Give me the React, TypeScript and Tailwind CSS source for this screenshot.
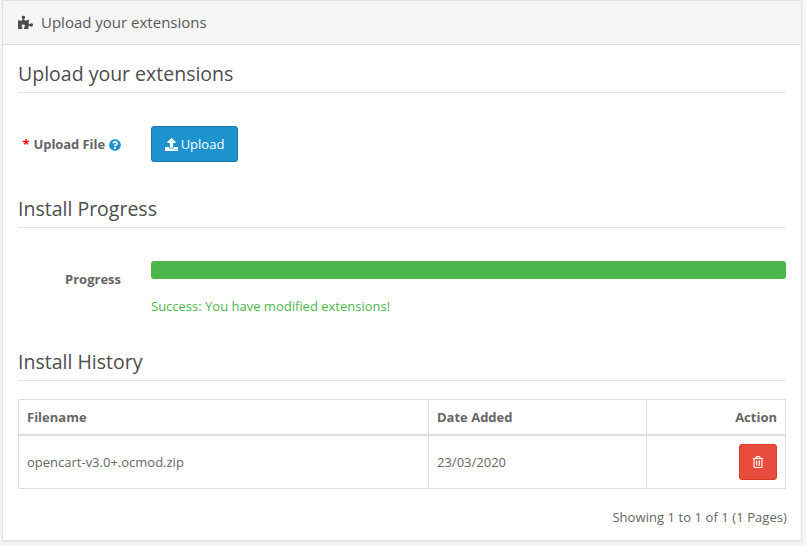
import React from 'react';
import { FaPuzzlePiece, FaUpload, FaQuestionCircle, FaRegTrashAlt } from 'react-icons/fa';

const SectionTitle: React.FC<{ children: React.ReactNode }> = ({ children }) => (
  <div className="h-[30px] border-b border-[#e5e5e5] text-[19.5px] leading-[22px] text-[#4d4d4d]">{children}</div>
);

const App: React.FC = () => {
  return (
    <div className="h-[546px] overflow-hidden bg-[#f5f5f5] pr-[4px] pl-[2px] font-['Open_Sans',sans-serif] text-[13px] text-[#666666]">
      <div className="h-[541px] border border-[#e0e0e0] bg-white shadow-[0_1px_1px_rgba(0,0,0,0.05)]">
        <div className="flex h-[44px] items-center border-b border-[#dddddd] bg-[#f5f5f5] pl-[15px] text-[15px] text-[#595959]">
          <FaPuzzlePiece className="mr-[8px] h-[15px] w-[15px] text-[#4d4d4d]" />
          Upload your extensions
        </div>
        <div className="px-[15px] pt-[18px]">
          <SectionTitle>Upload your extensions</SectionTitle>
          <div className="mt-[33px] flex h-[36px] items-center">
            <div className="flex w-[133px] items-center justify-end pt-[2px] pr-[30px] font-bold">
              <span className="mr-[4px] text-[#ff0000]">*</span>
              <span className="tracking-[-0.08px]">Upload File</span>
              <FaQuestionCircle className="ml-[4px] h-[12px] w-[12px] text-[#1e91cf]" />
            </div>
            <button className="flex h-[36px] w-[87px] items-center justify-center rounded-[3px] border border-[#1978ab] bg-[#1e91cf] pt-[1px] text-white">
              <FaUpload className="mr-[3px] h-[13px] w-[13px]" />
              Upload
            </button>
          </div>
          <div className="mt-[36px]">
            <SectionTitle>Install Progress</SectionTitle>
          </div>
          <div className="mt-[33px] flex">
            <div className="w-[133px] pr-[30px] pt-[9px] text-right font-bold">Progress</div>
            <div className="flex-1">
              <div className="h-[18px] rounded-[3px] bg-[#4cb64c]" />
              <div className="mt-[18px] leading-[18px] text-[#4cb64c]">Success: You have modified extensions!</div>
            </div>
          </div>
          <div className="mt-[36px]">
            <SectionTitle>Install History</SectionTitle>
          </div>
          <table className="mt-[18px] w-full table-fixed border-collapse border border-[#dddddd]">
            <colgroup>
              <col className="w-[410px]" />
              <col className="w-[218px]" />
              <col />
            </colgroup>
            <thead>
              <tr className="h-[35px]">
                <th className="border border-b-2 border-[#dddddd] px-[8px] pt-[2px] text-left font-bold">Filename</th>
                <th className="border border-b-2 border-[#dddddd] px-[8px] pt-[2px] text-left font-bold">Date Added</th>
                <th className="border border-b-2 border-[#dddddd] px-[8px] pt-[2px] text-right font-bold">Action</th>
              </tr>
            </thead>
            <tbody>
              <tr className="h-[54px]">
                <td className="border border-[#dddddd] px-[8px] pt-[2px]">opencart-v3.0+.ocmod.zip</td>
                <td className="border border-[#dddddd] px-[8px] pt-[2px]">23/03/2020</td>
                <td className="border border-[#dddddd] px-[8px]">
                  <div className="flex justify-end">
                    <button className="flex h-[36px] w-[38px] items-center justify-center rounded-[3px] border border-[#dd3a1f] bg-[#e74c3c] text-white">
                      <FaRegTrashAlt className="h-[12px] w-[12px]" />
                    </button>
                  </div>
                </td>
              </tr>
            </tbody>
          </table>
          <div className="-mr-[1px] mt-[19px] text-right leading-[18px] tracking-[0.07px]">Showing 1 to 1 of 1 (1 Pages)</div>
        </div>
      </div>
    </div>
  );
};

export default App;
